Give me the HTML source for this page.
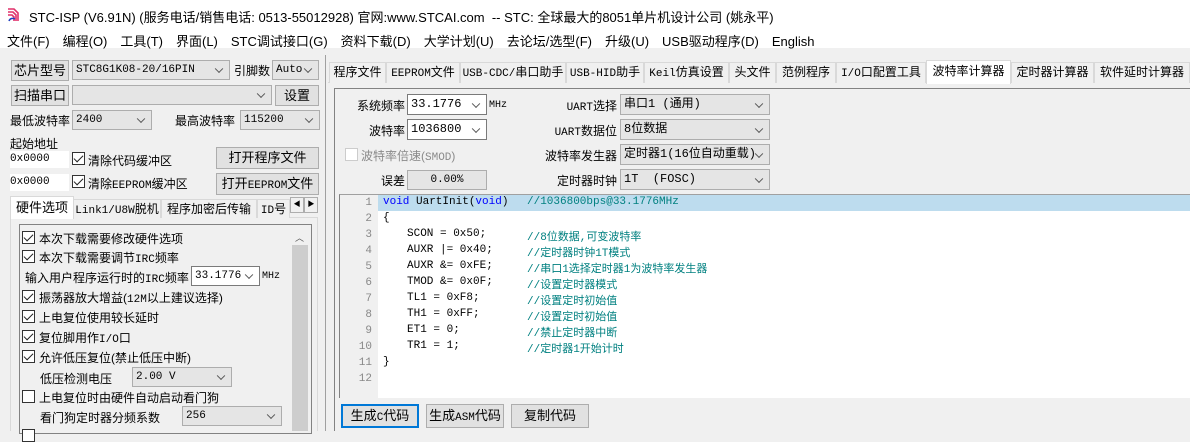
<!DOCTYPE html>
<html><head><meta charset="utf-8">
<style>
*{box-sizing:border-box;margin:0;padding:0}
body{width:1190px;height:431px;overflow:hidden;background:#f0f0f0;position:relative;font-family:"Liberation Sans","Noto Sans CJK SC",sans-serif;font-size:12px;color:#000}
.a{position:absolute;white-space:nowrap}
.btn{position:absolute;background:#e1e1e1;border:1px solid #adadad;text-align:center;font-size:12px;white-space:nowrap}
.cb{position:absolute;border:1px solid #adadad;background:#e5e5e5;font-family:"Liberation Mono","Noto Sans CJK SC",monospace;font-size:11px;padding-left:3px;white-space:nowrap;overflow:hidden}
.cb.w{background:#fff;border-color:#7a7a7a}
.cb:after{content:"";position:absolute;right:7px;top:50%;width:5px;height:5px;border-right:1px solid #555;border-bottom:1px solid #555;transform:translateY(-70%) rotate(45deg)}
.chk{position:absolute;width:13px;height:13px;border:1px solid #333;background:#fff}
.chk.on:after{content:"";position:absolute;left:3px;top:0px;width:4px;height:8px;border-right:1.5px solid #222;border-bottom:1.5px solid #222;transform:rotate(45deg)}
.tab{position:absolute;top:62px;height:21px;border:1px solid #d9d9d9;border-bottom:none;background:#f0f0f0;font-size:12px;text-align:center;line-height:19px;white-space:nowrap;overflow:hidden}
.ln{position:absolute;left:340px;width:32px;text-align:right;color:#888;font-family:"Liberation Mono",monospace;font-size:11px}
.cd{position:absolute;font-family:"Liberation Mono",monospace;font-size:11px;color:#000;white-space:pre}
.cm{position:absolute;left:527px;font-family:"Liberation Mono","Noto Sans CJK SC",monospace;font-size:11px;color:#008080;white-space:pre}
.lt{position:absolute;font-size:12px;white-space:nowrap}
.r{position:absolute;text-align:right;font-size:12px;white-space:nowrap}
.m{font-family:"Liberation Mono",monospace;font-size:11px}
</style></head><body>
<div class="a" style="left:0;top:0;width:1190px;height:30px;background:#fff"></div>
<svg class="a" style="left:7px;top:7px" width="16" height="16" viewBox="0 0 16 16">
<path d="M1 2h6l4 4v8M1 5h5l3 3v6M1 8h4l2 2v4" stroke="#e0306a" stroke-width="1.6" fill="none"/>
<path d="M2 14c1-3 4-3 6-2" stroke="#2040c0" stroke-width="1.5" fill="none"/>
</svg>
<div class="a" style="left:29px;top:7px;font-size:13px">STC-ISP (V6.91N) (服务电话/销售电话: 0513-55012928) 官网:www.STCAI.com&nbsp; -- STC: 全球最大的8051单片机设计公司 (姚永平)</div>
<div class="a" style="left:0;top:30px;width:1190px;height:18px;background:#fff"></div>
<div class="a" style="left:7px;top:31px;font-size:13px">
<span style="margin-right:13px">文件(F)</span><span style="margin-right:13px">编程(O)</span><span style="margin-right:13px">工具(T)</span><span style="margin-right:13px">界面(L)</span><span style="margin-right:13px">STC调试接口(G)</span><span style="margin-right:13px">资料下载(D)</span><span style="margin-right:13px">大学计划(U)</span><span style="margin-right:13px">去论坛/选型(F)</span><span style="margin-right:13px">升级(U)</span><span style="margin-right:13px">USB驱动程序(D)</span><span>English</span></div>

<div class="btn" style="left:11px;top:60px;width:58px;height:21px;line-height:19px;font-size:13px">芯片型号</div>
<div class="cb" style="left:72px;top:60px;width:158px;height:20px;line-height:18px">STC8G1K08-20/16PIN</div>
<div class="lt" style="left:234px;top:62px">引脚数</div>
<div class="cb" style="left:272px;top:60px;width:47px;height:20px;line-height:18px">Auto</div>
<div class="btn" style="left:11px;top:85px;width:58px;height:21px;line-height:19px;font-size:13px">扫描串口</div>
<div class="cb" style="left:72px;top:85px;width:200px;height:20px"></div>
<div class="btn" style="left:275px;top:85px;width:44px;height:21px;line-height:19px;font-size:13px">设置</div>
<div class="lt" style="left:10px;top:112px">最低波特率</div>
<div class="cb" style="left:72px;top:110px;width:80px;height:20px;line-height:18px">2400</div>
<div class="lt" style="left:175px;top:112px">最高波特率</div>
<div class="cb" style="left:240px;top:110px;width:80px;height:20px;line-height:18px">115200</div>
<div class="lt" style="left:10px;top:135px">起始地址</div>
<div class="a m" style="left:10px;top:151px;width:59px;height:17px;background:#fff;line-height:17px">0x0000</div>
<div class="chk on" style="left:72px;top:152px"></div>
<div class="lt" style="left:88px;top:152px">清除代码缓冲区</div>
<div class="btn" style="left:216px;top:147px;width:103px;height:22px;line-height:20px;font-size:13px">打开程序文件</div>
<div class="a m" style="left:10px;top:174px;width:59px;height:17px;background:#fff;line-height:17px">0x0000</div>
<div class="chk on" style="left:72px;top:175px"></div>
<div class="lt" style="left:88px;top:175px">清除<span class="m">EEPROM</span>缓冲区</div>
<div class="btn" style="left:216px;top:173px;width:103px;height:22px;line-height:20px;font-size:13px">打开<span class="m">EEPROM</span>文件</div>
<div class="a" style="left:10px;top:217px;width:308px;height:214px;border:1px solid #d9d9d9;background:#fff"></div>
<div class="a" style="left:11px;top:218px;width:306px;height:213px;background:#f0f0f0"></div>
<div class="tab" style="left:73px;top:199px;width:88px;height:19px"><span class="m">Link1/U8W</span>脱机</div>
<div class="tab" style="left:161px;top:199px;width:96px;height:19px">程序加密后传输</div>
<div class="tab" style="left:257px;top:199px;width:33px;height:19px"><span class="m">ID</span>号</div>
<div class="a" style="left:290px;top:197px;width:14px;height:16px;border:1px solid #adadad;background:#f0f0f0;font-size:7px;text-align:center;line-height:14px">◀</div>
<div class="a" style="left:304px;top:197px;width:14px;height:16px;border:1px solid #adadad;background:#f0f0f0;font-size:7px;text-align:center;line-height:14px">▶</div>
<div class="tab" style="left:10px;top:196px;width:64px;height:23px;background:#fff;line-height:21px;font-size:13px">硬件选项</div>
<div class="a" style="left:19px;top:224px;width:293px;height:210px;border:1px solid #828282;background:#f0f0f0"></div>
<div class="a" style="left:292px;top:245px;width:16px;height:186px;background:#cdcdcd"></div>
<div class="a" style="left:295px;top:231px;font-size:9px;color:#555">︿</div>
<div class="chk on" style="left:22px;top:231px"></div><div class="lt" style="left:39px;top:230px">本次下载需要修改硬件选项</div>
<div class="chk on" style="left:22px;top:250px"></div><div class="lt" style="left:39px;top:249px">本次下载需要调节<span class="m">IRC</span>频率</div>
<div class="lt" style="left:25px;top:269px">输入用户程序运行时的<span class="m">IRC</span>频率</div>
<div class="cb w" style="left:191px;top:266px;width:69px;height:20px;line-height:18px">33.1776</div>
<div class="a m" style="left:262px;top:271px;font-size:10px">MHz</div>
<div class="chk on" style="left:22px;top:290px"></div><div class="lt" style="left:39px;top:289px">振荡器放大增益(<span class="m">12M</span>以上建议选择)</div>
<div class="chk on" style="left:22px;top:310px"></div><div class="lt" style="left:39px;top:309px">上电复位使用较长延时</div>
<div class="chk on" style="left:22px;top:330px"></div><div class="lt" style="left:39px;top:329px">复位脚用作<span class="m">I/O</span>口</div>
<div class="chk on" style="left:22px;top:350px"></div><div class="lt" style="left:39px;top:349px">允许低压复位(禁止低压中断)</div>
<div class="lt" style="left:40px;top:370px">低压检测电压</div>
<div class="cb" style="left:132px;top:367px;width:100px;height:20px;line-height:18px">2.00 V</div>
<div class="chk" style="left:22px;top:390px"></div><div class="lt" style="left:39px;top:389px">上电复位时由硬件自动启动看门狗</div>
<div class="lt" style="left:40px;top:409px">看门狗定时器分频系数</div>
<div class="cb" style="left:182px;top:406px;width:100px;height:20px;line-height:18px">256</div>
<div class="chk" style="left:22px;top:429px"></div>

<div class="a" style="left:325px;top:55px;width:1px;height:376px;background:#a0a0a0"></div>
<div class="a" style="left:328px;top:82px;width:862px;height:1px;background:#d9d9d9"></div>
<div class="a" style="left:334px;top:88px;width:856px;height:343px;border-left:1px solid #828282;border-top:1px solid #828282"></div>
<div class="tab" style="left:329px;width:57px">程序文件</div>
<div class="tab" style="left:386px;width:74px"><span class="m">EEPROM</span>文件</div>
<div class="tab" style="left:460px;width:106px"><span class="m">USB-CDC/</span>串口助手</div>
<div class="tab" style="left:566px;width:78px"><span class="m">USB-HID</span>助手</div>
<div class="tab" style="left:644px;width:85px"><span class="m">Keil</span>仿真设置</div>
<div class="tab" style="left:729px;width:47px">头文件</div>
<div class="tab" style="left:776px;width:60px">范例程序</div>
<div class="tab" style="left:836px;width:90px"><span class="m">I/O</span>口配置工具</div>
<div class="tab" style="left:926px;top:60px;width:85px;height:24px;background:#fff;line-height:21px">波特率计算器</div>
<div class="tab" style="left:1011px;width:83px">定时器计算器</div>
<div class="tab" style="left:1094px;width:96px">软件延时计算器</div>

<div class="r" style="left:330px;width:75px;top:97px">系统频率</div>
<div class="cb w" style="left:407px;top:94px;width:80px;height:21px;line-height:19px;font-size:12px">33.1776</div>
<div class="a m" style="left:489px;top:100px;font-size:10px">MHz</div>
<div class="r" style="left:330px;width:75px;top:122px">波特率</div>
<div class="cb w" style="left:407px;top:119px;width:80px;height:21px;line-height:19px;font-size:12px">1036800</div>
<div class="chk" style="left:345px;top:148px;border-color:#ccc"></div>
<div class="lt" style="left:361px;top:147px;color:#8a8a8a">波特率倍速(<span class="m">SMOD</span>)</div>
<div class="r" style="left:330px;width:75px;top:172px">误差</div>
<div class="a m" style="left:407px;top:170px;width:80px;height:20px;border:1px solid #adadad;background:#e5e5e5;text-align:center;line-height:18px">0.00%</div>
<div class="r" style="left:500px;width:117px;top:97px"><span class="m">UART</span>选择</div>
<div class="cb" style="left:620px;top:94px;width:150px;height:21px;line-height:19px;font-size:12px">串口1 (通用)</div>
<div class="r" style="left:500px;width:117px;top:122px"><span class="m">UART</span>数据位</div>
<div class="cb" style="left:620px;top:119px;width:150px;height:21px;line-height:19px;font-size:12px">8位数据</div>
<div class="r" style="left:500px;width:117px;top:147px">波特率发生器</div>
<div class="cb" style="left:620px;top:144px;width:150px;height:21px;line-height:19px;font-size:12px">定时器1(16位自动重载)</div>
<div class="r" style="left:500px;width:117px;top:172px">定时器时钟</div>
<div class="cb" style="left:620px;top:169px;width:150px;height:21px;line-height:19px;font-size:12px">1T&nbsp; (FOSC)</div>

<div class="a" style="left:339px;top:194px;width:851px;height:204px;background:#fff;border-left:1px solid #828282;border-top:1px solid #a0a0a0"></div>
<div class="a" style="left:340px;top:195px;width:38px;height:203px;background:#f0f0f0"></div>
<div class="a" style="left:378px;top:195px;width:812px;height:16px;background:#bddcee"></div>
<div class="ln" style="top:197px">1</div><div class="ln" style="top:213px">2</div><div class="ln" style="top:229px">3</div><div class="ln" style="top:245px">4</div><div class="ln" style="top:261px">5</div><div class="ln" style="top:277px">6</div><div class="ln" style="top:293px">7</div><div class="ln" style="top:309px">8</div><div class="ln" style="top:325px">9</div><div class="ln" style="top:341px">10</div><div class="ln" style="top:357px">11</div><div class="ln" style="top:373px">12</div>
<div class="cd" style="left:383px;top:196px"><span style="color:#0000ff">void</span> UartInit(<span style="color:#0000ff">void</span>)</div><div class="cm" style="top:196px">//1036800bps@33.1776MHz</div>
<div class="cd" style="left:383px;top:212px">{</div>
<div class="cd" style="left:407px;top:228px">SCON = 0x50;</div><div class="cm" style="top:228px">//8位数据,可变波特率</div>
<div class="cd" style="left:407px;top:244px">AUXR |= 0x40;</div><div class="cm" style="top:244px">//定时器时钟1T模式</div>
<div class="cd" style="left:407px;top:260px">AUXR &amp;= 0xFE;</div><div class="cm" style="top:260px">//串口1选择定时器1为波特率发生器</div>
<div class="cd" style="left:407px;top:276px">TMOD &amp;= 0x0F;</div><div class="cm" style="top:276px">//设置定时器模式</div>
<div class="cd" style="left:407px;top:292px">TL1 = 0xF8;</div><div class="cm" style="top:292px">//设置定时初始值</div>
<div class="cd" style="left:407px;top:308px">TH1 = 0xFF;</div><div class="cm" style="top:308px">//设置定时初始值</div>
<div class="cd" style="left:407px;top:324px">ET1 = 0;</div><div class="cm" style="top:324px">//禁止定时器中断</div>
<div class="cd" style="left:407px;top:340px">TR1 = 1;</div><div class="cm" style="top:340px">//定时器1开始计时</div>
<div class="cd" style="left:383px;top:356px">}</div>

<div class="btn" style="left:341px;top:404px;width:78px;height:24px;line-height:20px;border:2px solid #0078d7;font-size:13px">生成<span class="m">C</span>代码</div>
<div class="btn" style="left:426px;top:404px;width:78px;height:24px;line-height:22px;font-size:13px">生成<span class="m">ASM</span>代码</div>
<div class="btn" style="left:511px;top:404px;width:78px;height:24px;line-height:22px;font-size:13px">复制代码</div>
</body></html>
